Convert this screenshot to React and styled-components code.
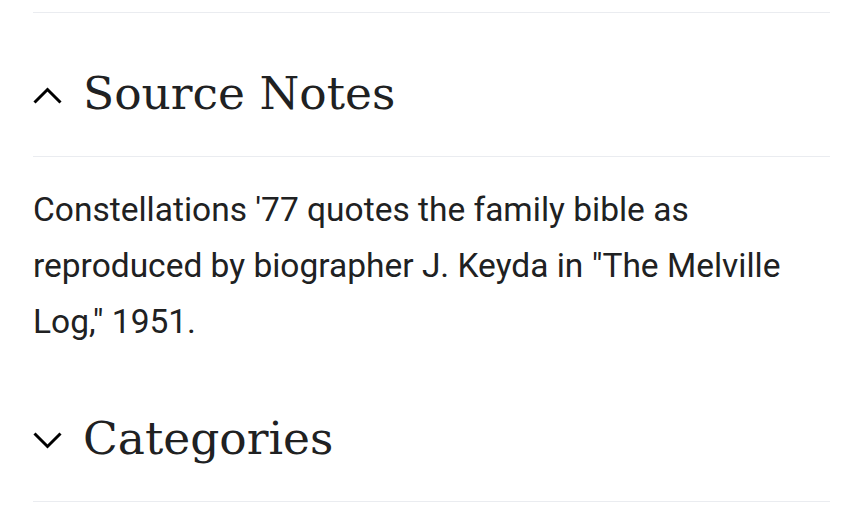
import React from 'react';
import styled, { createGlobalStyle } from 'styled-components';

const GlobalStyle = createGlobalStyle`
  html, body {
    margin: 0;
    padding: 0;
    background: #ffffff;
  }
  body {
    font-family: Roboto, "Liberation Sans", sans-serif;
    color: #202122;
  }
`;

const Page = styled.div`
  padding: 12px 34px 0 33px;
`;

const Section = styled.section`
  border-top: ${(p) => (p.$first ? '1px solid #eaecf0' : 'none')};
`;

const Header = styled.div`
  display: flex;
  align-items: center;
  gap: 21px;
  height: 144px;
  box-sizing: border-box;
  padding-top: 19px;
  border-bottom: 1px solid #eaecf0;
`;

const Title = styled.h2`
  margin: 0;
  font-family: "DejaVu Serif", "Liberation Serif", serif;
  font-weight: 400;
  font-size: 45.5px;
  line-height: 60px;
  color: #202122;
`;

const Chevron = styled.svg`
  width: 29px;
  height: 17px;
  flex: none;
  margin-top: 3px;
`;

const Body = styled.p`
  margin: 25px 0 8px;
  font-size: 33.5px;
  line-height: 56px;
  color: #202122;
`;

const Arrow = ({ up }) => (
  <Chevron viewBox="0 0 29 17" fill="none">
    <path
      d={up ? 'M1.5 15.5 L14.5 2.5 L27.5 15.5' : 'M1.5 1.5 L14.5 14.5 L27.5 1.5'}
      stroke="#000"
      strokeWidth="3"
    />
  </Chevron>
);

export default function App() {
  return (
    <>
      <GlobalStyle />
      <Page>
        <Section $first>
          <Header>
            <Arrow up />
            <Title>Source Notes</Title>
          </Header>
          <Body>
            Constellations '77 quotes the family bible as reproduced by biographer J. Keyda in "The Melville
            Log," 1951.
          </Body>
        </Section>
        <Section>
          <Header>
            <Arrow />
            <Title>Categories</Title>
          </Header>
        </Section>
      </Page>
    </>
  );
}
